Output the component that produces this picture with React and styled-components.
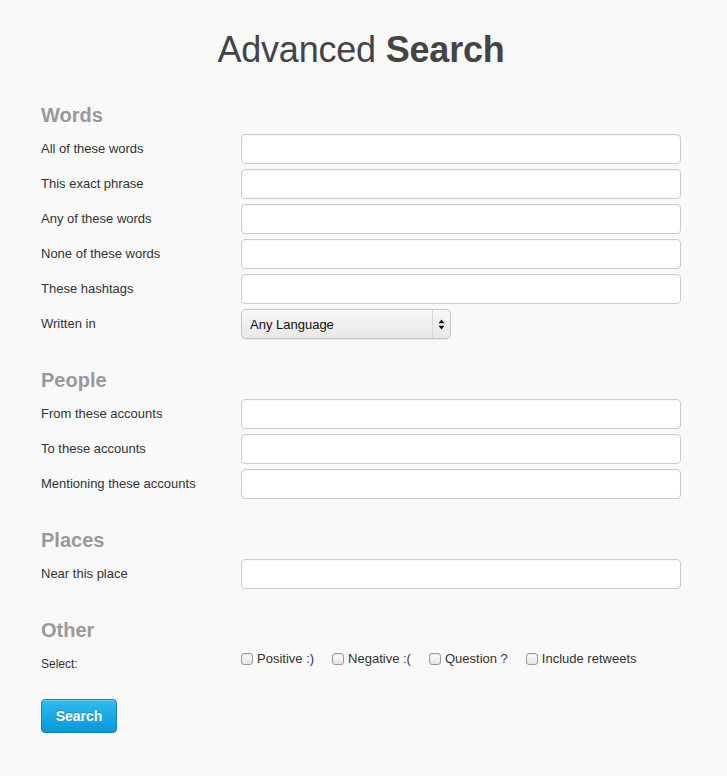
import React from "react";
import styled, { createGlobalStyle } from "styled-components";

const GlobalStyle = createGlobalStyle`
  html, body {
    margin: 0;
    padding: 0;
    background: #f9f9f9;
  }
  body {
    font-family: "Liberation Sans", Arial, Helvetica, sans-serif;
    color: #333;
  }
`;

const Page = styled.div`
  width: 640px;
  padding: 30px 0 40px 41px;
`;

const Title = styled.h1`
  margin: 0;
  font-size: 36px;
  line-height: 40px;
  font-weight: normal;
  color: #444;
  text-align: center;
  letter-spacing: -0.2px;
  & b {
    font-weight: bold;
  }
`;

const Section = styled.section`
  margin-top: ${({ first }) => (first ? "32px" : "28px")};
`;

const Heading = styled.h2`
  margin: 0 0 6px;
  font-size: 20px;
  line-height: 26px;
  font-weight: bold;
  color: #999;
`;

const Rows = styled.div`
  display: flex;
  flex-direction: column;
  gap: 5px;
`;

const Row = styled.div`
  display: flex;
  align-items: ${({ top }) => (top ? "flex-start" : "center")};
`;

const Label = styled.label`
  width: 200px;
  flex: none;
  font-size: ${({ small }) => (small ? "12px" : "13px")};
  line-height: 18px;
  padding-top: ${({ small }) => (small ? "6px" : "0")};
  color: #333;
`;

const TextInput = styled.input`
  box-sizing: border-box;
  width: 440px;
  height: 30px;
  margin: 0;
  padding: 4px 8px;
  border: 1px solid #ccc;
  border-radius: 4px;
  background: #fff;
  box-shadow: inset 0 1px 1px rgba(0, 0, 0, 0.04);
  font: 13px "Liberation Sans", Arial, sans-serif;
  outline: none;
`;

const SelectBox = styled.div`
  box-sizing: border-box;
  display: flex;
  width: 210px;
  height: 30px;
  border: 1px solid #c4c4c4;
  border-radius: 5px;
  background: linear-gradient(#f7f7f7, #e9e9e9);
  box-shadow: inset 0 1px 0 #fff, 0 1px 1px rgba(0, 0, 0, 0.08);
`;

const Select = styled.select`
  flex: 1;
  appearance: none;
  -webkit-appearance: none;
  border: 0;
  background: transparent;
  padding: 0 8px;
  font: 13px "Liberation Sans", Arial, sans-serif;
  color: #111;
  outline: none;
`;

const ArrowCell = styled.div`
  width: 17px;
  flex: none;
  border-left: 1px solid #d6d6d6;
  display: flex;
  align-items: center;
  justify-content: center;
`;

const Checks = styled.div`
  display: flex;
  align-items: center;
  gap: 18px;
  padding-top: 1px;
`;

const CheckLabel = styled.label`
  display: flex;
  align-items: center;
  gap: 4px;
  font-size: 13px;
  line-height: 18px;
  color: #333;
`;

const Check = styled.input`
  appearance: none;
  -webkit-appearance: none;
  box-sizing: border-box;
  width: 12px;
  height: 12px;
  margin: 0;
  border: 1px solid #9a9a9a;
  border-radius: 3px;
  background: linear-gradient(#fdfdfd, #e4e4e4);
  box-shadow: inset 0 1px 1px rgba(0, 0, 0, 0.08);
`;

const Button = styled.button`
  margin-top: 26px;
  width: 76px;
  height: 34px;
  border: 1px solid #0b86c4;
  border-radius: 4px;
  background: linear-gradient(#2fbaf0, #0a98d6);
  box-shadow: inset 0 1px 0 rgba(255, 255, 255, 0.3);
  color: #fff;
  font: bold 14px "Liberation Sans", Arial, sans-serif;
  text-shadow: 0 -1px 0 rgba(0, 0, 0, 0.2);
  cursor: pointer;
`;

const Arrows = () => (
  <svg width="7" height="11" viewBox="0 0 7 11">
    <path d="M3.5 0.5 L6.5 4.2 L0.5 4.2 Z" fill="#111" />
    <path d="M3.5 10.5 L6.5 6.8 L0.5 6.8 Z" fill="#111" />
  </svg>
);

const Field = ({ label }) => (
  <Row>
    <Label>{label}</Label>
    <TextInput type="text" />
  </Row>
);

const App = () => (
  <>
    <GlobalStyle />
    <Page>
      <Title>
        Advanced <b>Search</b>
      </Title>

      <Section first>
        <Heading>Words</Heading>
        <Rows>
          <Field label="All of these words" />
          <Field label="This exact phrase" />
          <Field label="Any of these words" />
          <Field label="None of these words" />
          <Field label="These hashtags" />
          <Row>
            <Label>Written in</Label>
            <SelectBox>
              <Select defaultValue="any">
                <option value="any">Any Language</option>
              </Select>
              <ArrowCell>
                <Arrows />
              </ArrowCell>
            </SelectBox>
          </Row>
        </Rows>
      </Section>

      <Section>
        <Heading>People</Heading>
        <Rows>
          <Field label="From these accounts" />
          <Field label="To these accounts" />
          <Field label="Mentioning these accounts" />
        </Rows>
      </Section>

      <Section>
        <Heading>Places</Heading>
        <Rows>
          <Field label="Near this place" />
        </Rows>
      </Section>

      <Section>
        <Heading>Other</Heading>
        <Row top>
          <Label small>Select:</Label>
          <Checks>
            <CheckLabel>
              <Check type="checkbox" /> Positive :)
            </CheckLabel>
            <CheckLabel>
              <Check type="checkbox" /> Negative :(
            </CheckLabel>
            <CheckLabel>
              <Check type="checkbox" /> Question ?
            </CheckLabel>
            <CheckLabel>
              <Check type="checkbox" /> Include retweets
            </CheckLabel>
          </Checks>
        </Row>
      </Section>

      <Button>Search</Button>
    </Page>
  </>
);

export default App;
